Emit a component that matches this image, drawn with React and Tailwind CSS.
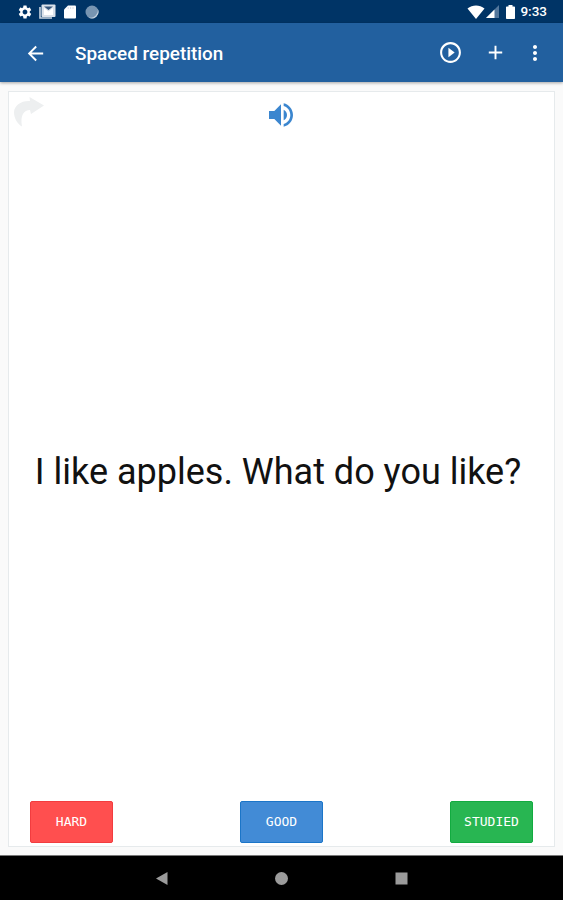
import {
  MdAdd,
  MdArrowBack,
  MdMoreVert,
  MdPlayCircleOutline,
  MdSettings,
  MdVolumeUp,
} from "react-icons/md";

const answers = [
  { label: "HARD", style: "bg-[#ff4f4f] border-[#f23c3f]" },
  { label: "GOOD", style: "bg-[#428bd6] border-[#1b75c8]" },
  { label: "STUDIED", style: "bg-[#28b652] border-[#12ab40]" },
];

const StatusBar = () => (
  <div className="flex h-[23px] shrink-0 items-center justify-between bg-[#003466] pl-[17px] pr-[16px] text-white">
    <div className="flex items-center">
      <MdSettings className="size-4" />
      {/* Mail */}
      <svg className="ml-[6px] h-[15px] w-[17px]" viewBox="0 0 17 15">
        <path d="M1 3v11h12" fill="none" stroke="#c9d5e1" strokeWidth="1.6" />
        <rect x="2.5" y="0.5" width="14" height="12.5" rx="1" fill="#dbe2ea" />
        <path d="M5 11V4l4.500 3.500L14 4v7z" fill="#fff" />
        <path d="M5 2.500h9L9.500 6z" fill="#35557b" />
      </svg>
      {/* SD card */}
      <svg className="ml-[8px] h-[14px] w-[12px]" viewBox="0 0 12 14">
        <path d="M4 0.5h7a1 1 0 0 1 1 1v11a1 1 0 0 1-1 1H1a1 1 0 0 1-1-1v-8z" fill="#fff" />
        <path d="M4.2 2v2M6.6 2v2M9 2v2" stroke="#cbd3df" strokeWidth="0.8" />
      </svg>
      {/* Sync */}
      <svg className="ml-[9px] size-[14px]" viewBox="0 0 14 14">
        <circle cx="7" cy="7" r="6.5" fill="#7895b2" />
        <path d="M3 12a6.5 6.5 0 0 0 9.500-8.500A7 7 0 0 1 3 12z" fill="#c5d3e0" />
      </svg>
    </div>
    <div className="flex items-center">
      {/* Wifi */}
      <svg className="h-[14px] w-[18px]" viewBox="0 0 18 14">
        <path d="M0.5 3.5C5.5-0.5 12.5-0.5 17.5 3.5L9 14z" fill="#fff" />
      </svg>
      {/* Signal */}
      <svg className="ml-px h-[13px] w-[13px]" viewBox="0 0 13 13">
        <path d="M13 0v13H0z" fill="#53779c" />
        <path d="M8.5 4.5V13H0z" fill="#fff" />
      </svg>
      {/* Battery */}
      <svg className="ml-[7px] h-[14px] w-[9px]" viewBox="0 0 9 14">
        <path d="M2.500 0h4v1.500h1.700a.8.8 0 0 1 .8.8v10.900a.8.8 0 0 1-.8.8H.8a.8.8 0 0 1-.8-.8V2.300a.8.8 0 0 1 .8-.8h1.700z" fill="#fff" />
      </svg>
      <span className="ml-[5px] pt-px text-[13.5px] leading-none font-medium">9:33</span>
    </div>
  </div>
);

const AppBar = () => (
  <header className="z-10 flex h-[59px] shrink-0 items-center bg-[#22609f] pl-6 pr-4 text-white shadow-[0_1px_3px_rgba(0,0,0,0.35)]">
    <MdArrowBack className="mt-px size-[23px]" />
    <h1 className="ml-[28px] flex-1 pt-[3px] text-[18.9px] font-medium">
      Spaced repetition
    </h1>
    <MdPlayCircleOutline className="size-[25px]" />
    <MdAdd className="ml-[21px] size-[23px]" />
    <MdMoreVert className="ml-[16px] size-[24px]" />
  </header>
);

const NavBar = () => (
  <nav className="flex h-[45px] shrink-0 items-center justify-center gap-[107px] border-t border-[#777] bg-black">
    <svg className="size-[13px]" viewBox="0 0 13 13" fill="#9b9b9b">
      <path d="M1 6.500 12.500 0v13z" />
    </svg>
    <svg className="size-[13px]" viewBox="0 0 13 13" fill="#9b9b9b">
      <circle cx="6.500" cy="6.500" r="6.500" />
    </svg>
    <svg className="size-[13px]" viewBox="0 0 13 13" fill="#9b9b9b">
      <rect x="0.500" y="0.500" width="12" height="12" />
    </svg>
  </nav>
);

const App = () => {
  return (
    <div className="flex h-[900px] w-[563px] flex-col overflow-hidden bg-[#fafafa] font-[Roboto,sans-serif]">
      <StatusBar />
      <AppBar />

      <main className="flex min-h-0 flex-1 flex-col px-2 pt-[9px] pb-[8px]">
        <div className="flex flex-1 flex-col border border-[#e6eaec] bg-white">
          {/* Card tools */}
          <div className="grid h-[46px] grid-cols-3 items-center">
            <svg className="-mt-[8px] ml-[4px] h-[31px] w-[32px]" viewBox="0 0 32 31">
              <path
                d="M16.500 1 31 9.500 18 18l-1-4C11 14 7 19 9 30.500 4.500 28 1 22 1 16.500 1 9.500 8 4.500 17 5z"
                fill="#edeff0"
              />
            </svg>
            <MdVolumeUp className="size-[32px] justify-self-center text-[#3b86cf]" />
          </div>

          <div className="flex flex-1 items-center justify-center pt-[5px] pr-[7px]">
            <p className="text-[36px] whitespace-nowrap text-[#111]">
              I like apples. What do you like?
            </p>
          </div>

          {/* Answers */}
          <div className="flex justify-between px-[21px] pb-[3px]">
            {answers.map((answer) => (
              <button
                key={answer.label}
                type="button"
                className={`h-[42px] w-[83px] rounded-[2px] border font-['DejaVu_Sans_Mono',monospace] text-[13px] text-white ${answer.style}`}
              >
                {answer.label}
              </button>
            ))}
          </div>
        </div>
      </main>

      <NavBar />
    </div>
  );
};

export default App;
